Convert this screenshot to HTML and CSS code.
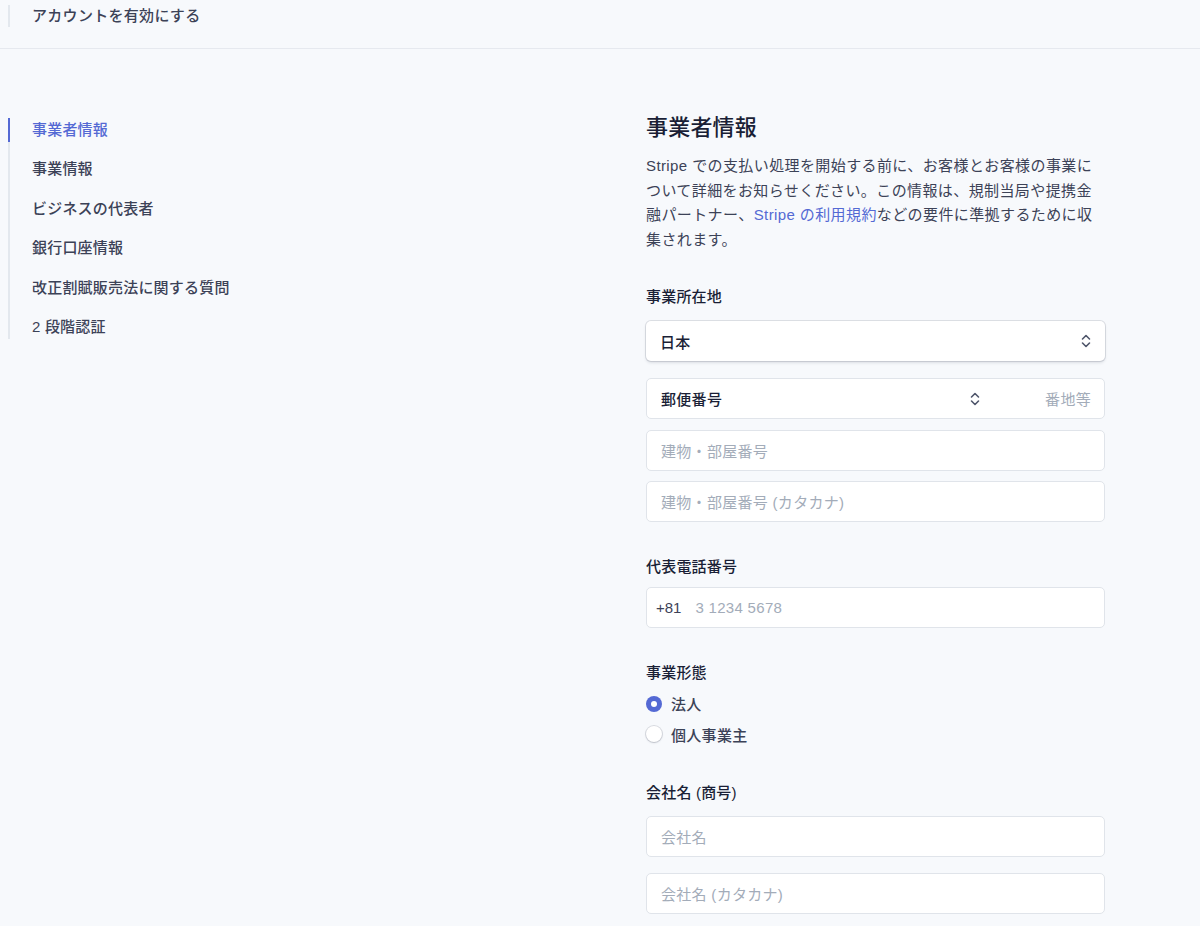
FILE: index.html
```html
<!DOCTYPE html>
<html lang="ja">
<head>
<meta charset="utf-8">
<title>アカウントを有効にする</title>
<link rel="stylesheet" href="styles.css">
</head>
<body>
<header class="topbar">
  <div class="topbar-title">アカウントを有効にする</div>
</header>
<div class="layout">
  <nav class="steps">
    <a class="step active">事業者情報</a>
    <a class="step">事業情報</a>
    <a class="step">ビジネスの代表者</a>
    <a class="step">銀行口座情報</a>
    <a class="step">改正割賦販売法に関する質問</a>
    <a class="step">2 段階認証</a>
  </nav>
  <main class="content">
    <h1 class="heading">事業者情報</h1>
    <p class="intro">Stripe での支払い処理を開始する前に、お客様とお客様の事業について詳細をお知らせください。この情報は、規制当局や提携金融パートナー、<a class="link">Stripe の利用規約</a>などの要件に準拠するために収集されます。</p>

    <section class="field field-first">
      <div class="label">事業所在地</div>
      <div class="select">
        <span class="value">日本</span>
        <svg class="chev" width="10" height="14" viewBox="0 0 10 14"><path d="M1.5 5 L5 1.5 L8.5 5 M1.5 9 L5 12.5 L8.5 9" fill="none" stroke="#4f566b" stroke-width="1.6" stroke-linecap="round" stroke-linejoin="round"/></svg>
      </div>
      <div class="input postal">
        <span class="value postal-code">郵便番号</span>
        <svg class="chev" width="10" height="14" viewBox="0 0 10 14"><path d="M1.5 5 L5 1.5 L8.5 5 M1.5 9 L5 12.5 L8.5 9" fill="none" stroke="#4f566b" stroke-width="1.6" stroke-linecap="round" stroke-linejoin="round"/></svg>
        <span class="placeholder postal-rest">番地等</span>
      </div>
      <div class="input gap-s"><span class="placeholder">建物・部屋番号</span></div>
      <div class="input gap-xs"><span class="placeholder">建物・部屋番号 (カタカナ)</span></div>
    </section>

    <section class="field">
      <div class="label">代表電話番号</div>
      <div class="input phone gap-phone">
        <span class="prefix">+81</span>
        <span class="placeholder">3 1234 5678</span>
      </div>
    </section>

    <section class="field">
      <div class="label">事業形態</div>
      <div class="radios">
        <label class="radio-row"><span class="radio checked"></span><span>法人</span></label>
        <label class="radio-row"><span class="radio"></span><span>個人事業主</span></label>
      </div>
    </section>

    <section class="field field-last">
      <div class="label">会社名 (商号)</div>
      <div class="input gap-company"><span class="placeholder">会社名</span></div>
      <div class="input gap-m"><span class="placeholder">会社名 (カタカナ)</span></div>
    </section>
  </main>
</div>
</body>
</html>
```

FILE: styles.css
```css
* { box-sizing: border-box; }
html, body {
  margin: 0;
  padding: 0;
  background: #f7f9fc;
}
body {
  font-family: "Liberation Sans", "Noto Sans CJK JP", sans-serif;
  font-size: 15px;
  color: #3c4257;
  height: 926px;
  overflow: hidden;
}

.topbar {
  height: 49px;
  padding-top: 5px;
  padding-left: 8px;
  border-bottom: 1px solid #e6e9ef;
}
.topbar-title {
  border-left: 2px solid #e3e8ee;
  padding-left: 22px;
  height: 22px;
  line-height: 22px;
  font-size: 15px;
  font-weight: 500;
  color: #3c4257;
  letter-spacing: 0.3px;
}

.layout {
  display: flex;
  padding-left: 8px;
  padding-top: 65px;
}

.steps {
  width: 638px;
  display: flex;
  flex-direction: column;
  align-self: flex-start;
  gap: 15.4px;
  border-left: 2px solid #e3e8ee;
  margin-top: 4px;
}
.step {
  display: block;
  margin-left: -2px;
  border-left: 2px solid transparent;
  padding-left: 22px;
  line-height: 24px;
  height: 24px;
  font-weight: 500;
  color: #3c4257;
  letter-spacing: 0.2px;
}
.step.active {
  border-left-color: #5469d4;
  color: #5469d4;
}

.content {
  width: 459px;
}
.heading {
  margin: 0;
  font-size: 22px;
  line-height: 28px;
  font-weight: 500;
  color: #1a1f36;
  letter-spacing: 0.2px;
}
.intro {
  margin: 12px 0 0;
  line-height: 24.6px;
  letter-spacing: 0.4px;
  color: #3c4257;
}
.link { color: #5469d4; }

.field { margin-top: 35px; }
.field-first { margin-top: 35px; }
.field-last { margin-top: 37px; }
.label {
  line-height: 20px;
  font-weight: 500;
  color: #1a1f36;
  letter-spacing: 0.2px;
}

.select, .input {
  display: flex;
  align-items: center;
  background: #fff;
  border-radius: 5px;
  padding: 0 14px;
}
.select {
  height: 40px;
  margin-top: 14px;
  box-shadow: 0 0 0 1px rgba(60, 66, 87, 0.14), 0 2px 3px rgba(60, 66, 87, 0.14);
  justify-content: space-between;
}
.input {
  height: 41px;
  border: 1px solid #e0e4ea;
  margin-top: 11px;
}
.postal { margin-top: 17px; padding-right: 13px; }
.postal-code { width: 309px; }
.postal-rest { margin-left: auto; }
.gap-s { margin-top: 11px; }
.gap-xs { margin-top: 10px; }
.gap-phone { margin-top: 10px; padding-left: 9px; }
.gap-company { margin-top: 13px; }
.gap-m { margin-top: 16px; }

.value {
  color: #1a1f36;
  font-weight: 500;
  letter-spacing: 0.3px;
}
.placeholder {
  color: #a3acb9;
  letter-spacing: 0.3px;
}
.prefix {
  color: #3c4257;
  margin-right: 14px;
}
.chev { display: block; flex: none; }

.radios {
  margin-top: 8.5px;
  display: flex;
  flex-direction: column;
  gap: 6.5px;
}
.radio-row {
  display: flex;
  align-items: center;
  height: 24px;
  gap: 9px;
  color: #3c4257;
  font-weight: 500;
  letter-spacing: 0.3px;
}
.radio {
  width: 16px;
  height: 16px;
  border-radius: 50%;
  background: #fff;
  box-shadow: 0 0 0 1px rgba(60, 66, 87, 0.16), 0 1px 2px rgba(60, 66, 87, 0.18);
  flex: none;
  position: relative;
}
.radio.checked {
  background: #5469d4;
  box-shadow: none;
}
.radio.checked::after {
  content: "";
  position: absolute;
  left: 5px;
  top: 5px;
  width: 6px;
  height: 6px;
  border-radius: 50%;
  background: #fff;
}
```
